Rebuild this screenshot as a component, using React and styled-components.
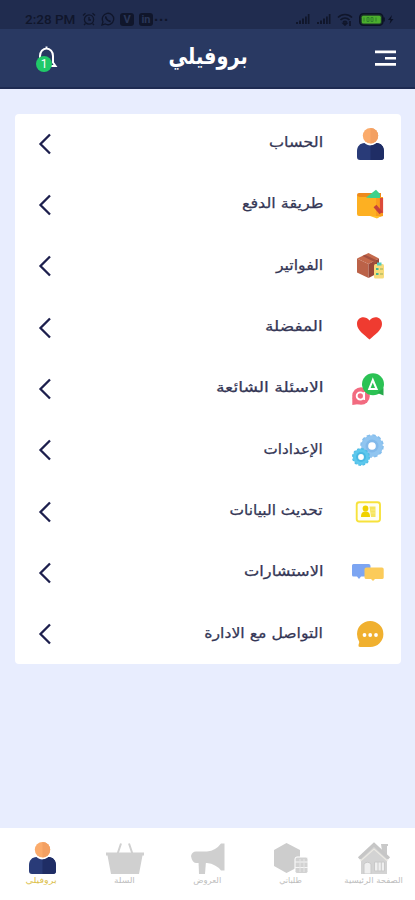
import React from 'react';
import styled, { createGlobalStyle } from 'styled-components';

const App = () => {
  const [active, setActive] = React.useState('profile');
  return (
    <Screen>
      <GlobalStyle />
      <StatusBar>
        <StatusGroup>
          <Clock>2:28 PM</Clock>
          <AlarmIcon />
          <WhatsappIcon />
          <AppBadge>V</AppBadge>
          <AppBadge>in</AppBadge>
          <Dots>···</Dots>
        </StatusGroup>
        <StatusGroup $gap="6px">
          <SignalIcon />
          <SignalIcon />
          <WifiIcon />
          <BatteryIcon />
        </StatusGroup>
      </StatusBar>
      <Header>
        <IconButton aria-label="الإشعارات">
          <BellIcon />
          <Badge>1</Badge>
        </IconButton>
        <Title>بروفيلي</Title>
        <IconButton aria-label="القائمة">
          <MenuIcon />
        </IconButton>
      </Header>
      <Content>
        <Card>
          {rows.map(({ label, Icon, scale }) => (
            <Row key={label}>
              <Icon />
              <Label $scale={scale}>{label}</Label>
              <Chevron />
            </Row>
          ))}
        </Card>
      </Content>
      <TabBar>
        {tabs.map(({ id, label, Icon, scale }) => (
          <Tab key={id} onClick={() => setActive(id)}>
            <Icon />
            <TabLabel $active={active === id} $scale={scale}>
              {label}
            </TabLabel>
          </Tab>
        ))}
      </TabBar>
    </Screen>
  );
};

export default App;

/* Status bar icons */
const AlarmIcon = () => (
  <svg width="14" height="14" viewBox="0 0 14 14" fill="none" stroke="#10162b" strokeWidth="1.3">
    <circle cx="7" cy="7.5" r="4.6" />
    <path d="M7 5v3h2M1 3.5 3.5 1.2M13 3.5l-2.5-2.3M3.5 11.5 2 13M10.5 11.5 12 13" />
  </svg>
);

const WhatsappIcon = () => (
  <svg width="14" height="14" viewBox="0 0 14 14" fill="none" stroke="#10162b" strokeWidth="1.3">
    <path d="M1 13l1-3.3A5.7 5.7 0 1 1 4.3 12z" />
    <path d="M5 4.3c-1 2 2.5 5.6 4.6 4.8" strokeWidth="1.8" />
  </svg>
);

const SignalIcon = () => (
  <svg width="15" height="10" viewBox="0 0 15 10" fill="#10162b">
    <path d="M1 8h2v2H1zM4 6.5h2V10H4zM7 4.5h2V10H7zM10 2.5h1.8V10H10zM12.8 0h1.7v10h-1.7z" />
  </svg>
);

const WifiIcon = () => (
  <svg width="16" height="13" viewBox="0 0 16 13" fill="none" stroke="#10162b" strokeWidth="1.7">
    <path d="M1 4.5c4-4 10-4 14 0M3.5 7c2.6-2.6 6.4-2.6 9 0M6 9.5c1.2-1.2 2.8-1.2 4 0" />
    <path d="M8 12l1.5-1.5h-3zM13 8v5" />
  </svg>
);

const BatteryIcon = () => (
  <svg width="37" height="13" viewBox="0 0 37 13">
    <rect x="0.8" y="0.8" width="23" height="11.4" rx="3.5" fill="#1c3a2a" stroke="#0c1226" strokeWidth="1.6" />
    <rect x="2.8" y="2.8" width="19" height="7.6" rx="1.5" fill="#4caf2e" />
    <path d="M5 4.5v4M8 4.5h2v4H8zM12 4.5h2v4h-2zM17 4.5v4" stroke="#2f7f2a" fill="none" />
    <path d="M25 4.5v4" stroke="#0c1226" strokeWidth="1.6" />
    <path d="M33 2l-4 5h2.5l-1 4 4-5H32z" fill="#0c1226" />
  </svg>
);

/* Header icons */
const BellIcon = () => (
  <svg width="24" height="26" viewBox="0 0 24 26" fill="none" stroke="#fff" strokeWidth="2">
    <path d="M12.5 1.500v2M6 21V11a6.500 7.500 0 0 1 13 0v6.500l2.500 3.500H3" />
  </svg>
);

const MenuIcon = () => (
  <svg width="21" height="18" viewBox="0 0 21 18" fill="#fff">
    <path d="M0 1.500h21v2.700H0zM10 8h11v2.500H10zM0 14h21v2.700H0z" />
  </svg>
);

const Chevron = () => (
  <svg width="14" height="22" viewBox="0 0 14 22" fill="none" stroke="#1d1f4d" strokeWidth="2.3">
    <path d="M12 1.500 2.500 11l9.500 9.500" />
  </svg>
);

/* Row icons, all on a 32px grid */
const Svg = ({ children }) => (
  <svg width="32" height="32" viewBox="0 0 32 32">
    {children}
  </svg>
);

const userShape = (
  <>
    <circle cx="18.5" cy="7.7" r="7.7" fill="#fbab6b" />
    <path d="M18.5 0a7.7 7.7 0 0 1 0 15.4z" fill="#f3a062" />
    <path d="M5 29v-5.5c0-5 3-8.500 7.500-8.500 3 3.300 9 3.300 12 0 4.500 0 7.500 3.500 7.500 8.500V29q0 3-3 3H8q-3 0-3-3z" fill="#293b78" />
    <path d="M18.500 17.500c2.300 0 4.500-.9 6-2.500 4.500 0 7.500 3.500 7.500 8.500V29q0 3-3 3H18.500z" fill="#1f2d65" />
  </>
);

const UserIcon = () => <Svg>{userShape}</Svg>;

const WalletIcon = () => (
  <Svg>
    <path d="M5 6q0-2 2-2h22v6H5z" fill="#ee8a1c" />
    <path d="M5 6q1 2 3 2h21q2 0 2 2v17H7q-2 0-2-2z" fill="#fdb022" />
    <path d="M24 8h7v19l-7 2z" fill="#fa9d1c" />
    <path d="M14 8.500 24 .8 28 5v4H18z" fill="#3fd28b" />
    <path d="M29.500 9v15" stroke="#dc4a3a" strokeWidth="3.200" fill="none" />
    <path d="M23 17l6 7" stroke="#c5413a" strokeWidth="3.800" fill="none" />
    <path d="M18 27h11l-4 2.500z" fill="#ffc02c" />
  </Svg>
);

const BoxIcon = () => (
  <Svg>
    <path d="M5 8.500 16.500 3 27 8.500 16.500 14z" fill="#c4694b" />
    <path d="M5 8.500 16.500 14v14L5 22.500z" fill="#bb6248" />
    <path d="M27 8.500 16.500 14v14L27 22.500z" fill="#994737" />
    <path d="M10.500 6 21.500 11.500v3l2.500-1.500v-3L13 4.800z" fill="#a3503f" />
    <rect x="22" y="14" width="10" height="14.5" rx="1.5" fill="#f7dc7b" />
    <path d="M25 12.500h4.500v3H25z" fill="#52c9bd" />
    <path d="M24 19h2.500M24 24h2.500" stroke="#43b793" strokeWidth="2" />
    <path d="M28 19h3M28 24h3" stroke="#b9bd67" strokeWidth="1.500" />
  </Svg>
);

const HeartIcon = () => (
  <Svg>
    <path d="M17.500 27.500C12 22.500 5 18 5 12 5 5 13 3 17.500 8.500 22 3 30 5 30 12c0 6-7 10.500-12.500 15.500z" fill="#ef3b30" />
  </Svg>
);

const FaqIcon = () => (
  <Svg>
    <circle cx="9" cy="23" r="8.800" fill="#f26b80" />
    <path d="M.3 32v-8l7 7z" fill="#f26b80" />
    <circle cx="8.300" cy="23" r="3.600" fill="none" stroke="#fff" strokeWidth="1.900" />
    <path d="M12.200 19v8" stroke="#fff" strokeWidth="1.700" />
    <circle cx="21" cy="11.200" r="11" fill="#2bc254" />
    <path d="M31.500 15v7.500l-6-2.500z" fill="#25a94b" />
    <path d="M20.800 7 17.200 16h7.400z" fill="none" stroke="#fff" strokeWidth="2" />
  </Svg>
);

const GearsIcon = () => (
  <Svg>
    <circle cx="20" cy="12" r="10.800" fill="#91c5f0" />
    <circle cx="20" cy="12" r="11" fill="none" stroke="#85beed" strokeWidth="1.600" strokeDasharray="3.460 2.300" />
    <circle cx="20" cy="12" r="6.500" fill="#82b9ea" />
    <circle cx="20" cy="12" r="3.800" fill="#fff" />
    <circle cx="9" cy="23" r="8.200" fill="#5cc8ed" />
    <circle cx="9" cy="23" r="8.300" fill="none" stroke="#4fbce5" strokeWidth="1.400" strokeDasharray="2.600 1.750" />
    <circle cx="9" cy="23" r="5" fill="#48b8e3" />
    <circle cx="9" cy="23" r="2.900" fill="#fff" />
  </Svg>
);

const IdCardIcon = () => (
  <Svg>
    <rect x="4.700" y="6.200" width="23.300" height="19.300" rx="2.500" fill="#fffff4" stroke="#f7e23c" strokeWidth="1.900" />
    <circle cx="13.500" cy="12.500" r="2.900" fill="#f0d200" />
    <path d="M9 21c0-4.300 1.800-5.500 4.500-5.500s4.500 1.200 4.500 5.500z" fill="#f0d200" />
    <path d="M17.500 10.500h6V21H19z" fill="#f6e55e" />
    <path d="M19 14h4M19 17h4" stroke="#f9ec84" />
  </Svg>
);

const ConsultIcon = () => (
  <Svg>
    <path d="M1.500 7h15q2 0 2 2v9q0 1.500-2 1.500H9L7 22l-2-2.500H1.500Q0 19.500 0 18V8.500Q0 7 1.500 7z" fill="#7ca5f2" />
    <path d="M14.500 10.500h15.500q1.700 0 1.700 1.700v8.300q0 1.500-1.700 1.500h-7l-2 2-2-2h-4.500q-2 0-2-1.500v-8.300q0-1.700 2-1.700z" fill="#fbcb5a" />
  </Svg>
);

const ContactIcon = () => (
  <Svg>
    <path d="M5 16a13.200 13 0 1 1 13.200 13H8q-2 0-1.500-2l.8-3Q5 20 5 16z" fill="#f0b02f" />
    <circle cx="12.500" cy="17" r="1.900" fill="#fff" />
    <circle cx="18.200" cy="17" r="1.900" fill="#fff" />
    <circle cx="24" cy="17" r="1.900" fill="#fff" />
  </Svg>
);

/* Bottom bar icons */
const TabSvg = ({ children }) => (
  <svg width="40" height="32" viewBox="0 0 40 32">
    {children}
  </svg>
);

const HomeIcon = () => (
  <TabSvg>
    <path d="M27 2h7v2h-1v10l-5-5z" fill="#c9c9c9" />
    <path d="M7 15 20 4l13 11v17H7z" fill="#d3d3d3" />
    <path d="M5 16.500 20 2.500l15 14" fill="none" stroke="#c6c6c6" strokeWidth="3.200" />
    <path d="M6.500 19 20 7l13.500 12" fill="none" stroke="#ebe9e3" strokeWidth="1.200" />
    <path d="M10 32V22q3.500-3.500 7 0v10z" fill="#efefef" stroke="#c9c9c9" />
    <path d="M20.500 20h10v9h-10z" fill="#efefef" stroke="#c9c9c9" />
    <path d="M24 20v9M27.300 20v9" stroke="#c9c9c9" />
  </TabSvg>
);

const OrdersIcon = () => (
  <TabSvg>
    <path d="M15.500 1 29 8v16l-13.500 7L3 24V8z" fill="#cdcdcd" />
    <rect x="24" y="15" width="13" height="16.500" rx="2" fill="#d2d2d2" stroke="#fff" />
    <path d="M24 20h13M24 25.500h13" stroke="#f5f5f5" strokeWidth="1.200" />
    <path d="M29 17v13M33 17v13" stroke="#e6e6e6" />
  </TabSvg>
);

const OffersIcon = () => (
  <TabSvg>
    <path d="M3 14q1-4.500 5-4.500h11q9-1 14-8h3.500v27H33q-5-6.500-14-7.500H8q-4-.5-5-7z" fill="#cfcfcf" />
    <path d="M10.500 19H18l-1 13h-6z" fill="#cfcfcf" />
  </TabSvg>
);

const BasketIcon = () => (
  <TabSvg>
    <path d="M12.500 12 16 1.500M27.500 12 24 1.500" stroke="#d0d0d0" strokeWidth="2" />
    <path d="M1 10.500h38v3h-1.500L34 32H6L2.500 13.500H1z" fill="#d0d0d0" />
  </TabSvg>
);

const ProfileIcon = () => (
  <TabSvg>
    <g transform="translate(2)">{userShape}</g>
  </TabSvg>
);

const rows = [
  { label: 'الحساب', Icon: UserIcon, scale: 1.15 },
  { label: 'طريقة الدفع', Icon: WalletIcon, scale: 1.14 },
  { label: 'الفواتير', Icon: BoxIcon, scale: 1.12 },
  { label: 'المفضلة', Icon: HeartIcon, scale: 1.21 },
  { label: 'الاسئلة الشائعة', Icon: FaqIcon, scale: 1.23 },
  { label: 'الإعدادات', Icon: GearsIcon, scale: 1.08 },
  { label: 'تحديث البيانات', Icon: IdCardIcon, scale: 1.1 },
  { label: 'الاستشارات', Icon: ConsultIcon, scale: 1.16 },
  { label: 'التواصل مع الادارة', Icon: ContactIcon, scale: 1.12 },
];

const tabs = [
  { id: 'home', label: 'الصفحة الرئيسية', Icon: HomeIcon, scale: 1.06 },
  { id: 'orders', label: 'طلباتي', Icon: OrdersIcon, scale: 1 },
  { id: 'offers', label: 'العروض', Icon: OffersIcon, scale: 1.06 },
  { id: 'basket', label: 'السلة', Icon: BasketIcon, scale: 1.12 },
  { id: 'profile', label: 'بروفيلي', Icon: ProfileIcon, scale: 1.2 },
];

const GlobalStyle = createGlobalStyle`
  * {
    box-sizing: border-box;
  }
  body {
    margin: 0;
    font-family: 'DejaVu Sans', sans-serif;
  }
  svg {
    display: block;
    flex-shrink: 0;
  }
`;

const Screen = styled.div`
  display: flex;
  flex-direction: column;
  height: 900px;
  background: #e8edfe;
  overflow: hidden;
`;

const StatusBar = styled.div`
  display: flex;
  justify-content: space-between;
  align-items: center;
  height: 29px;
  padding: 9px 19px 0 25px;
  background: #202c4f;
`;

const StatusGroup = styled.div`
  display: flex;
  align-items: center;
  gap: ${(props) => props.$gap || '5px'};
`;

const Clock = styled.span`
  width: 52px;
  font: 500 13.5px Roboto, sans-serif;
  color: #10162b;
  white-space: nowrap;
`;

const AppBadge = styled.span`
  width: 14px;
  height: 13px;
  border-radius: 3px;
  background: #10162b;
  color: #2a3658;
  font: bold 11px/13px Roboto, sans-serif;
  text-align: center;
`;

const Dots = styled.span`
  margin-left: -4px;
  font: bold 15px/13px 'Liberation Sans', sans-serif;
  color: #10162b;
`;

const Header = styled.header`
  display: flex;
  justify-content: space-between;
  align-items: center;
  height: 60px;
  padding: 0 19px 0 34px;
  background: #293962;
  border-bottom: 2px solid #1e2b52;
`;

const IconButton = styled.button`
  position: relative;
  padding: 0;
  border: none;
  background: none;
  cursor: pointer;
`;

const Badge = styled.span`
  position: absolute;
  left: 2px;
  bottom: -1px;
  width: 16px;
  height: 16px;
  border-radius: 50%;
  background: #20c968;
  color: #fff;
  font: 12px/16px Roboto, sans-serif;
  text-align: center;
`;

const Title = styled.h1`
  margin: 0 16px 4px 0;
  font-size: 23px;
  font-weight: bold;
  line-height: 30px;
  color: #fff;
  transform: scaleX(0.84);
`;

const Content = styled.main`
  flex: 1;
  padding: 25px 14px 0 15px;
`;

const Card = styled.ul`
  direction: rtl;
  margin: 0;
  padding: 0;
  height: 550px;
  list-style: none;
  background: #fff;
  border-radius: 4px;
`;

const Row = styled.li`
  display: flex;
  align-items: center;
  height: 61.33px;
  padding: 0 17px 2px 23px;
`;

const Label = styled.span`
  margin: 0 29px 3px auto;
  font-size: 14px;
  line-height: 20px;
  color: #343655;
  -webkit-text-stroke: 0.25px #343655;
  white-space: nowrap;
  transform: scaleX(${(props) => props.$scale});
  transform-origin: right center;
`;

const TabBar = styled.nav`
  direction: rtl;
  display: flex;
  height: 72px;
  background: #fff;
`;

const Tab = styled.button`
  flex: 1;
  display: flex;
  flex-direction: column;
  align-items: center;
  padding: 14px 0 0;
  border: none;
  background: none;
  font-family: inherit;
  cursor: pointer;
`;

const TabLabel = styled.span`
  margin-top: 1px;
  font-size: 8px;
  line-height: 12px;
  color: ${(props) => (props.$active ? '#dcc04a' : '#bdbdbd')};
  white-space: nowrap;
  transform: scaleX(${(props) => props.$scale});
`;
